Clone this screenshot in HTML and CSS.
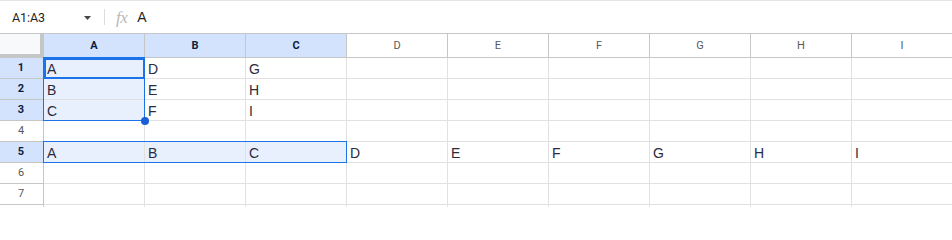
FILE: index.html
```html
<!DOCTYPE html>
<html>
<head>
<meta charset="utf-8">
<link rel="stylesheet" href="styles.css">
</head>
<body>
<div class="app">
  <div class="formula">
    <div class="namebox"><span class="name">A1:A3</span><svg class="caret" width="7" height="4" viewBox="0 0 7 4"><path d="M0 0h7L3.5 4z" fill="#444746"/></svg></div>
    <div class="sep"></div>
    <span class="fx">fx</span>
    <span class="fval">A</span>
  </div>
  <div class="sheet">
    <div class="corner"></div>
    <div class="ch sel">A</div><div class="ch sel">B</div><div class="ch sel">C</div><div class="ch">D</div><div class="ch">E</div><div class="ch">F</div><div class="ch">G</div><div class="ch">H</div><div class="ch">I</div>

    <div class="rh sel">1</div>
    <div class="c hi">A</div><div class="c">D</div><div class="c">G</div><div class="c"></div><div class="c"></div><div class="c"></div><div class="c"></div><div class="c"></div><div class="c"></div>

    <div class="rh sel">2</div>
    <div class="c hi">B</div><div class="c">E</div><div class="c">H</div><div class="c"></div><div class="c"></div><div class="c"></div><div class="c"></div><div class="c"></div><div class="c"></div>

    <div class="rh sel">3</div>
    <div class="c hi">C</div><div class="c">F</div><div class="c">I</div><div class="c"></div><div class="c"></div><div class="c"></div><div class="c"></div><div class="c"></div><div class="c"></div>

    <div class="rh">4</div>
    <div class="c"></div><div class="c"></div><div class="c"></div><div class="c"></div><div class="c"></div><div class="c"></div><div class="c"></div><div class="c"></div><div class="c"></div>

    <div class="rh sel">5</div>
    <div class="c hi">A</div><div class="c hi">B</div><div class="c hi">C</div><div class="c">D</div><div class="c">E</div><div class="c">F</div><div class="c">G</div><div class="c">H</div><div class="c">I</div>

    <div class="rh">6</div>
    <div class="c"></div><div class="c"></div><div class="c"></div><div class="c"></div><div class="c"></div><div class="c"></div><div class="c"></div><div class="c"></div><div class="c"></div>

    <div class="rh">7</div>
    <div class="c"></div><div class="c"></div><div class="c"></div><div class="c"></div><div class="c"></div><div class="c"></div><div class="c"></div><div class="c"></div><div class="c"></div>

    <div class="rh"></div>
    <div class="c"></div><div class="c"></div><div class="c"></div><div class="c"></div><div class="c"></div><div class="c"></div><div class="c"></div><div class="c"></div><div class="c"></div>
  </div>

  <div class="range range-a"></div>
  <div class="range range-row"></div>
  <div class="active"></div>
  <div class="handle"></div>
</div>
</body>
</html>
```

FILE: styles.css
```css
html, body {
  margin: 0;
  padding: 0;
  background: #ffffff;
}

.app {
  position: relative;
  width: 952px;
  height: 207px;
  overflow: hidden;
  font-family: Roboto, "Liberation Sans", sans-serif;
  background: #ffffff;
}

.formula {
  display: flex;
  align-items: center;
  height: 32px;
  border-top: 1px solid #e6e4e4;
  border-bottom: 1px solid #c4c7c5;
}

.namebox {
  box-sizing: border-box;
  width: 104px;
  padding: 0 13px 0 12px;
  display: flex;
  align-items: center;
  justify-content: space-between;
}

.name {
  font-size: 12.5px;
  color: #1f1f1f;
  letter-spacing: -0.1px;
}

.caret {
  display: block;
  margin-top: 1px;
}

.sep {
  width: 1px;
  height: 16px;
  background: #dadce0;
}

.fx {
  margin-left: 11px;
  font-family: "Liberation Serif", serif;
  font-style: italic;
  font-size: 17px;
  color: #b8b8b8;
  line-height: 1;
  letter-spacing: -0.5px;
}

.fval {
  margin-left: 10px;
  font-family: "Liberation Sans", Arial, sans-serif;
  font-size: 14px;
  color: #1f1f1f;
}

.sheet {
  display: grid;
  grid-template-columns: 44px repeat(9, 101px);
  grid-template-rows: 24px;
  grid-auto-rows: 21px;
  width: 953px;
}

.sheet > div {
  box-sizing: border-box;
  border-right: 1px solid #e1e1e1;
  border-bottom: 1px solid #e1e1e1;
  overflow: hidden;
  white-space: nowrap;
}

.sheet > .corner {
  background: #f8f9fa;
  border-right: 4px solid #c4c7c5;
  border-bottom: 4px solid #c4c7c5;
}

.sheet > .ch {
  border-right: 1px solid #c4c7c5;
  border-bottom: 1px solid #c4c7c5;
  text-align: center;
  font-size: 11px;
  line-height: 23px;
  color: #575a5c;
}

.sheet > .rh {
  border-right: 1px solid #c4c7c5;
  border-bottom: 1px solid #c4c7c5;
  text-align: center;
  font-size: 11px;
  line-height: 20px;
  color: #575a5c;
  padding-right: 1px;
}

.sheet > .sel {
  background: #d3e3fd;
  color: #0b1d3e;
  font-weight: 700;
}

.sheet > .c {
  font-family: "Liberation Sans", Arial, sans-serif;
  font-size: 14px;
  line-height: 22px;
  height: 21px;
  padding-left: 3px;
  color: #2b2b3d;
}

.sheet > .hi {
  background: #e8f0fe;
}

.range {
  position: absolute;
  box-sizing: border-box;
  border: 1px solid #1a73e8;
  pointer-events: none;
}

.range-a {
  left: 43px;
  top: 57px;
  width: 102px;
  height: 64px;
}

.range-row {
  left: 43px;
  top: 141px;
  width: 304px;
  height: 22px;
}

.active {
  position: absolute;
  box-sizing: border-box;
  left: 44px;
  top: 58px;
  width: 101px;
  height: 21px;
  border: 2px solid #1a73e8;
}

.handle {
  position: absolute;
  left: 141px;
  top: 117px;
  width: 8px;
  height: 8px;
  border-radius: 50%;
  background: #1b5fd6;
}
```
